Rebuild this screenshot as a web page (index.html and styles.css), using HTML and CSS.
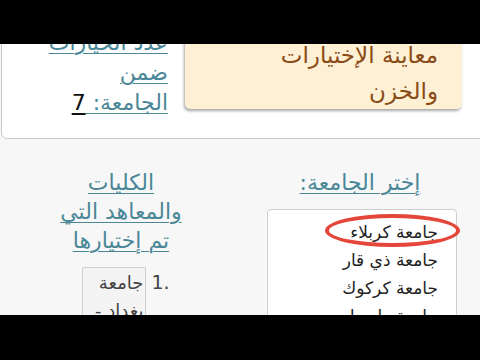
FILE: index.html
```html
<!DOCTYPE html>
<html lang="ar" dir="rtl">
<head>
<meta charset="utf-8">
<link rel="stylesheet" href="styles.css">
</head>
<body>
<div class="bar"></div>
<main class="screen">
  <div class="scroll">
    <section class="card">
      <div class="title-box">معاينة الإختيارات والخزن</div>
      <div class="count"><a class="link" href="#">عدد الخيارات ضمن الجامعة:&nbsp;</a><span class="num">7</span></div>
    </section>
    <section class="columns">
      <div class="col">
        <a class="link heading" href="#">إختر الجامعة:</a>
        <div class="listbox-wrap">
          <div class="listbox" role="listbox">
            <div class="opt">جامعة كربلاء</div>
            <div class="opt">جامعة ذي قار</div>
            <div class="opt">جامعة كركوك</div>
            <div class="opt">جامعة واسط</div>
          </div>
          <div class="ring"></div>
        </div>
      </div>
      <div class="col">
        <a class="link heading heading-wide" href="#">الكليات والمعاهد التي تم إختيارها</a>
        <ol class="chosen">
          <li><span class="marker">1.</span><span class="chip">جامعة بغداد -</span></li>
        </ol>
      </div>
    </section>
  </div>
</main>
<div class="bar"></div>
</body>
</html>
```
FILE: styles.css
```css
html, body {
  margin: 0;
  padding: 0;
}
body {
  width: 480px;
  height: 360px;
  overflow: hidden;
  background: #000;
  font-family: "DejaVu Sans", sans-serif;
}
.bar {
  height: 44px;
  background: #000;
}
.screen {
  display: block;
  height: 271px;
  overflow: hidden;
  background: #f7f7f7;
}
.scroll {
  margin-top: -34px;
}
.link {
  color: #4a8797;
  text-decoration: underline;
  text-decoration-thickness: 1px;
  text-underline-offset: 3px;
}
.card {
  margin: 0 -20px 0 1px;
  background: #fff;
  border: 1px solid #c9c9c9;
  border-radius: 6px;
  display: flex;
  align-items: flex-start;
  gap: 17px;
  padding: 16px 37px 20px 0;
}
.title-box {
  width: 277px;
  box-sizing: border-box;
  background: #fdf0d4;
  border-radius: 5px;
  box-shadow: -1px 2px 3px rgba(0, 0, 0, 0.35);
  color: #8a4a16;
  font-size: 23px;
  line-height: 36px;
  padding: 10px 24px 0 30px;
}
.count {
  width: 130px;
  margin-top: 1px;
  font-size: 22px;
  line-height: 30px;
}
.num {
  color: #111;
  text-decoration: underline;
  text-underline-offset: 3px;
}
.columns {
  display: grid;
  grid-template-columns: 1fr 1fr;
  padding-top: 29px;
}
.col {
  display: flex;
  flex-direction: column;
  align-items: center;
}
.heading {
  font-size: 22px;
  line-height: 29px;
  text-align: center;
}
.heading-wide {
  width: 140px;
  margin-left: 2px;
}
.listbox-wrap {
  position: relative;
  margin-top: 12px;
  margin-left: 4px;
}
.listbox {
  width: 190px;
  height: 120px;
  box-sizing: border-box;
  border: 1px solid #cfcfcf;
  border-radius: 4px;
  background: #fff;
  overflow: hidden;
  padding: 8px 18px 0 0;
}
.opt {
  font-size: 17px;
  line-height: 28px;
  color: #222;
}
.ring {
  position: absolute;
  top: 5px;
  right: -3px;
  width: 127px;
  height: 25px;
  border: 4px solid #e5463a;
  border-radius: 50%;
}
.chosen {
  list-style: none;
  margin: 12px 0 0 12px;
  padding: 0;
  color: #444;
  display: flex;
}
.chosen li {
  display: flex;
  gap: 5px;
}
.marker {
  direction: ltr;
  font-size: 19px;
  padding-top: 1px;
  line-height: 28px;
}
.chip {
  display: block;
  width: 60px;
  font-size: 18px;
  padding: 1px 2px 0 0;
  border: 1px solid #cfcfcf;
  border-radius: 2px;
  background: #f4f4f4;
  line-height: 28px;
}
```
